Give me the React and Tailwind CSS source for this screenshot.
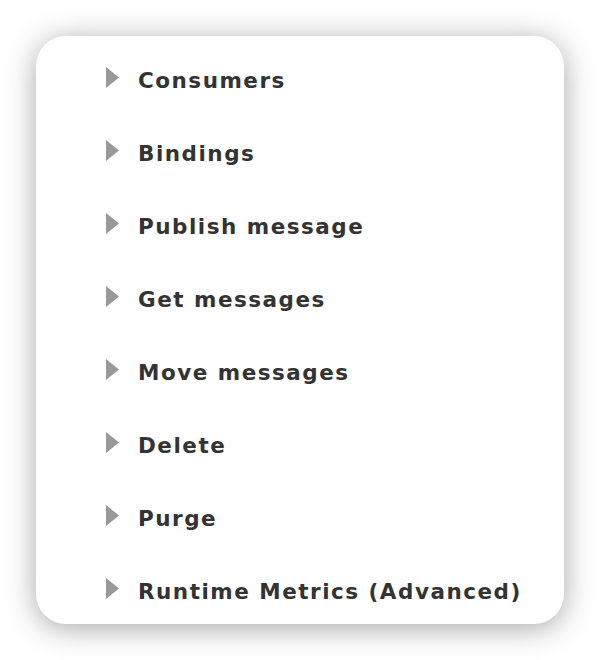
export default function App() {
  const items = [
    "Consumers",
    "Bindings",
    "Publish message",
    "Get messages",
    "Move messages",
    "Delete",
    "Purge",
    "Runtime Metrics (Advanced)",
  ];
  return (
    <div className="w-[600px] h-[660px] bg-white pt-[36px] pl-[36px]">
      <div
        className="w-[528px] h-[588px] rounded-[30px] bg-white shadow-[0_4px_30px_rgba(0,0,0,0.35)] pt-[8px] pl-[70px] overflow-hidden"
        style={{ fontFamily: '"DejaVu Sans", Verdana, sans-serif' }}
      >
        {items.map((t) => (
          <div key={t} className="h-[73px] flex items-center">
            <svg width="13" height="21" viewBox="0 0 13 21" className="shrink-0 -mt-[6px]">
              <polygon points="0,0 13,10.5 0,21" fill="#999999" />
            </svg>
            <span className="ml-[19px] text-[21.5px] font-bold text-[#333333] leading-none tracking-[1.5px]">{t}</span>
          </div>
        ))}
      </div>
    </div>
  );
}
